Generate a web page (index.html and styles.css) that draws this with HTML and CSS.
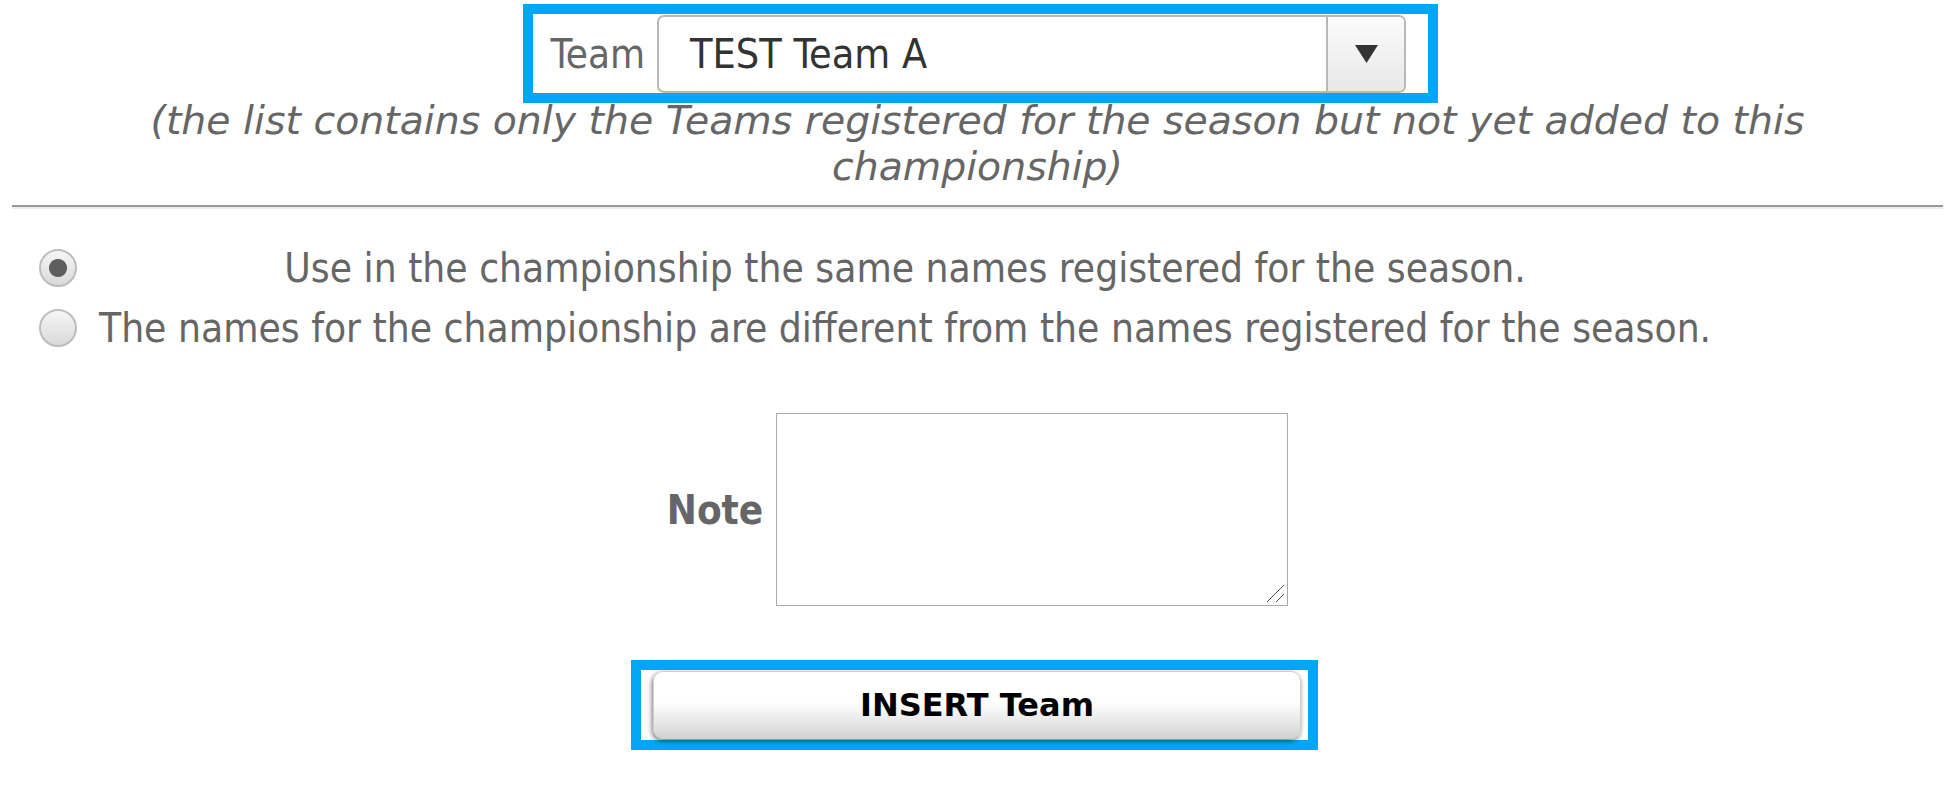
FILE: index.html
```html
<!DOCTYPE html>
<html lang="en">
<head>
    <meta charset="UTF-8">
    <title>Insert Team</title>
    <link rel="stylesheet" href="styles.css">
</head>
<body>
    <div class="page">
        <div class="team-row">
            <label class="team-label" for="teamSelect">Team</label>
            <div class="select" id="teamSelect">
                <span class="select-value">TEST Team A</span>
                <span class="select-arrow">
                    <svg width="23" height="18" viewBox="0 0 23 18"><polygon points="0,0 23,0 11.5,18" fill="#333"/></svg>
                </span>
            </div>
        </div>
        <p class="hint">(the list contains only the Teams registered for the season but not yet added to this championship)</p>

        <hr class="divider">

        <table class="names">
            <tr>
                <td class="names-radio"><input type="radio" name="names" id="sameNames" checked></td>
                <td class="names-label"><label for="sameNames">Use in the championship the same names registered for the season.</label></td>
            </tr>
            <tr>
                <td class="names-radio"><input type="radio" name="names" id="otherNames"></td>
                <td class="names-label"><label for="otherNames">The names for the championship are different from the names registered for the season.</label></td>
            </tr>
        </table>

        <table class="note">
            <tr>
                <th><label for="noteText">Note</label></th>
                <td>
                    <span class="note-field">
                        <textarea id="noteText"></textarea>
                        <svg class="grip" width="20" height="20" viewBox="0 0 20 20">
                            <line x1="2" y1="19" x2="19" y2="2" stroke="#555" stroke-width="1"/>
                            <line x1="11" y1="19" x2="19" y2="11" stroke="#555" stroke-width="1"/>
                        </svg>
                    </span>
                </td>
            </tr>
        </table>

        <div class="insert-box">
            <button class="insert-button">INSERT Team</button>
        </div>
    </div>
</body>
</html>
```

FILE: styles.css
```css
/* General */
body {
    margin: 0;
    background: #fff;
    font-family: "DejaVu Sans", Verdana, sans-serif;
    font-stretch: condensed;
    color: #666;
}

.page {
    padding: 4px 5px 40px 12px;
}

/* Team choice (highlighted) */
.team-row {
    display: flex;
    align-items: center;
    gap: 12px;
    width: fit-content;
    height: 79px;
    margin: 0 calc(50% - 460.5px) 0 auto;
    padding: 0 22px 0 18px;
    border: 10px solid #00a8f3;
}

.team-label {
    font-size: 40px;
    color: #666;
}

.select {
    display: flex;
    align-items: stretch;
    width: 749px;
    height: 78px;
    box-sizing: border-box;
    border: 2px solid #b8b8b8;
    border-radius: 7px;
    background: #fff;
}

.select-value {
    flex: 1;
    display: flex;
    align-items: center;
    padding-left: 31px;
    font-size: 41px;
    color: #333;
}

.select-arrow {
    width: 76px;
    display: flex;
    align-items: center;
    justify-content: center;
    border-left: 2px solid #b8b8b8;
    border-radius: 0 5px 5px 0;
    background: linear-gradient(#fbfbfb, #e8e8e8);
}

.hint {
    margin: -6px 0 0;
    text-align: center;
    font-size: 39.4px;
    font-style: italic;
    font-stretch: normal;
    color: #666;
}

.divider {
    margin: 16px 0 0;
    border: none;
    border-top: 2px solid #999;
    border-bottom: 2px solid #ececec;
}

/* Radio choice */
.names {
    margin: 29px 0 0 27px;
    border-collapse: collapse;
}

.names td {
    height: 60px;
    padding: 0;
}

.names-radio {
    width: 38px;
    padding-right: 22px !important;
}

.names-label {
    text-align: center;
    font-size: 40.3px;
    color: #666;
}

input[type="radio"] {
    appearance: none;
    display: block;
    width: 38px;
    height: 38px;
    margin: 0;
    border: 2px solid #bdbdbd;
    border-radius: 50%;
    background: linear-gradient(#f6f6f6, #d9d9d9);
    box-sizing: border-box;
}

input[type="radio"]:checked {
    background: radial-gradient(circle, #5e5e5e 0 8.5px, transparent 9.5px), linear-gradient(#f6f6f6, #d9d9d9);
}

/* Note */
.note {
    margin: 55px auto 0;
    border-collapse: collapse;
}

.note th {
    padding: 0 13px 0 0;
    text-align: right;
    font-size: 40px;
    font-weight: bold;
    color: #666;
}

.note td {
    padding: 0;
}

.note-field {
    position: relative;
    display: block;
}

textarea {
    display: block;
    width: 512px;
    height: 193px;
    box-sizing: border-box;
    border: 1px solid #aaa;
    font-family: inherit;
    resize: none;
}

.grip {
    position: absolute;
    right: 3px;
    bottom: 3px;
}

/* Insert button (highlighted) */
.insert-box {
    display: flex;
    align-items: center;
    width: 655px;
    height: 70px;
    margin: 54px 0 0 calc(50% - 346.5px);
    padding-left: 12px;
    border: 10px solid #00a8f3;
}

.insert-button {
    width: 648px;
    height: 68px;
    border: 1px solid #cfcfcf;
    border-radius: 10px;
    background: linear-gradient(#fff 0%, #fff 45%, #e4e4e4 80%, #d2d2d2 100%);
    box-shadow: -1px 2px 5px rgba(0, 0, 0, 0.55);
    font-family: inherit;
    font-size: 32px;
    font-weight: bold;
    color: #000;
    cursor: pointer;
}
```
